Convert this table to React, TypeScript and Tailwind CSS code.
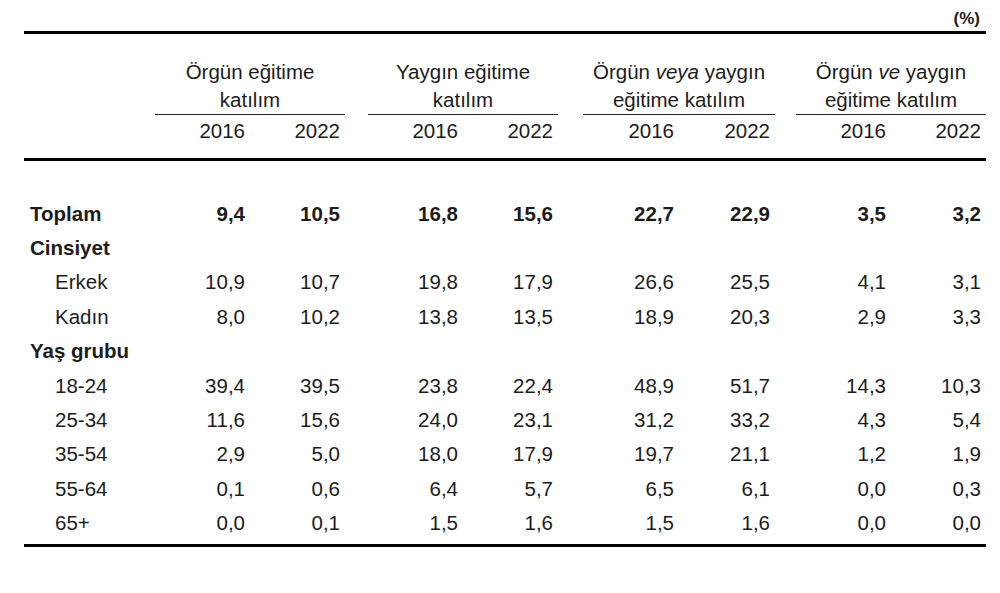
import { Fragment } from 'react';

type Row = {
  label: string;
  kind: 'total' | 'heading' | 'item';
  values?: string[];
};

const rows: Row[] = [
  { label: 'Toplam', kind: 'total', values: ['9,4', '10,5', '16,8', '15,6', '22,7', '22,9', '3,5', '3,2'] },
  { label: 'Cinsiyet', kind: 'heading' },
  { label: 'Erkek', kind: 'item', values: ['10,9', '10,7', '19,8', '17,9', '26,6', '25,5', '4,1', '3,1'] },
  { label: 'Kadın', kind: 'item', values: ['8,0', '10,2', '13,8', '13,5', '18,9', '20,3', '2,9', '3,3'] },
  { label: 'Yaş grubu', kind: 'heading' },
  { label: '18-24', kind: 'item', values: ['39,4', '39,5', '23,8', '22,4', '48,9', '51,7', '14,3', '10,3'] },
  { label: '25-34', kind: 'item', values: ['11,6', '15,6', '24,0', '23,1', '31,2', '33,2', '4,3', '5,4'] },
  { label: '35-54', kind: 'item', values: ['2,9', '5,0', '18,0', '17,9', '19,7', '21,1', '1,2', '1,9'] },
  { label: '55-64', kind: 'item', values: ['0,1', '0,6', '6,4', '5,7', '6,5', '6,1', '0,0', '0,3'] },
  { label: '65+', kind: 'item', values: ['0,0', '0,1', '1,5', '1,6', '1,5', '1,6', '0,0', '0,0'] },
];

const groups = [
  <>Örgün eğitime<br />katılım</>,
  <>Yaygın eğitime<br />katılım</>,
  <>Örgün <i>veya</i> yaygın<br />eğitime katılım</>,
  <>Örgün <i>ve</i> yaygın<br />eğitime katılım</>,
];

export default function App() {
  return (
    <div className="w-[1000px] h-[593px] bg-white text-[#1c1c1c] font-['Liberation_Sans',Arial,sans-serif] pl-[24px]">
      <div className="w-[962px] h-[31px] pt-[9px] pr-[6px] text-right text-[17px] leading-[20px] font-bold">(%)</div>

      <table className="w-[962px] table-fixed border-separate border-spacing-0 border-y-[3px] border-black text-[20.5px]">
        <colgroup>
          <col className="w-[131px]" />
          <col className="w-[95px]" />
          <col className="w-[95px]" />
          <col className="w-[23px]" />
          <col className="w-[95px]" />
          <col className="w-[95px]" />
          <col className="w-[25px]" />
          <col className="w-[96px]" />
          <col className="w-[96px]" />
          <col className="w-[21px]" />
          <col className="w-[95px]" />
          <col className="w-[95px]" />
        </colgroup>
        <thead>
          <tr>
            <th className="p-0" />
            {groups.map((g, i) => (
              <Fragment key={i}>
                {i > 0 && <th className="p-0" />}
                <th colSpan={2} className="p-0 pt-[24px] font-normal text-center leading-[28px] border-b-[1.5px] border-[#222]">
                  {g}
                </th>
              </Fragment>
            ))}
          </tr>
          <tr>
            <th className="p-0 border-b-[3px] border-black" />
            {groups.map((_, i) => (
              <Fragment key={i}>
                {i > 0 && <th className="p-0 border-b-[3px] border-black" />}
                <th className="p-0 pt-[2px] pb-[13px] pr-[5px] font-normal text-right leading-[28px] border-b-[3px] border-black">2016</th>
                <th className="p-0 pt-[2px] pb-[13px] pr-[5px] font-normal text-right leading-[28px] border-b-[3px] border-black">2022</th>
              </Fragment>
            ))}
          </tr>
        </thead>
        <tbody>
          <tr className="h-[35.5px]">
            <td colSpan={12} className="p-0" />
          </tr>
          {rows.map(row => (
            <tr key={row.label} className="h-[34.4px] leading-[24px]">
              <td className={`p-0 whitespace-nowrap ${row.kind === 'item' ? 'pl-[31px]' : 'pl-[6px] font-bold'}`}>
                {row.label}
              </td>
              {[0, 1, 2, 3].map(g => (
                <Fragment key={g}>
                  {g > 0 && <td className="p-0" />}
                  {[0, 1].map(k => (
                    <td key={k} className={`p-0 pr-[5px] text-right ${row.kind === 'total' ? 'font-bold' : ''}`}>
                      {row.values?.[g * 2 + k] ?? ''}
                    </td>
                  ))}
                </Fragment>
              ))}
            </tr>
          ))}
          <tr className="h-[3.5px]">
            <td colSpan={12} className="p-0" />
          </tr>
        </tbody>
      </table>
    </div>
  );
}
